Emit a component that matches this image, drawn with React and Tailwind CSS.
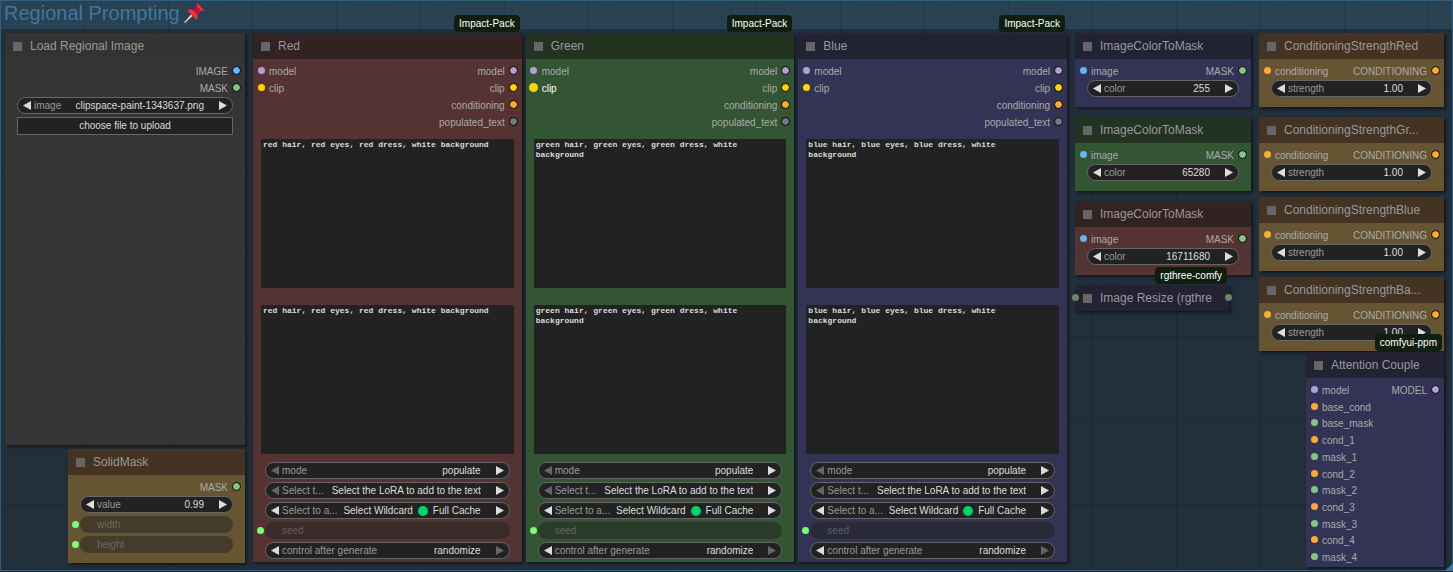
import { useId } from 'react';
import clsx from 'clsx';

const THEMES = {
  gray: { title: 'bg-[#333333]', body: 'bg-[#353535]' },
  red: { title: 'bg-[#332222]', body: 'bg-[#553333]' },
  green: { title: 'bg-[#223322]', body: 'bg-[#335533]' },
  blue: { title: 'bg-[#222233]', body: 'bg-[#333355]' },
  brown: { title: 'bg-[#443322]', body: 'bg-[#665533]' },
};

const DOTS = {
  model: 'bg-[#b39ddb]',
  clip: 'bg-[#ffd500]',
  conditioning: 'bg-[#ffa931]',
  image: 'bg-[#64b5f6]',
  mask: 'bg-[#81c784]',
  string: 'bg-[#777788]',
};

const PROMPTS = [
  { name: 'Red', theme: 'red', text: 'red hair, red eyes, red dress, white background' },
  { name: 'Green', theme: 'green', text: 'green hair, green eyes, green dress, white background', active: 'clip' },
  { name: 'Blue', theme: 'blue', text: 'blue hair, blue eyes, blue dress, white background' },
];

const PROMPT_OUTPUTS = [
  ['model', 'model'],
  ['clip', 'clip'],
  ['conditioning', 'conditioning'],
  ['populated_text', 'string'],
];

const COUPLE_INPUTS = [
  ['model', 'model'],
  ['base_cond', 'conditioning'],
  ['base_mask', 'mask'],
  ['cond_1', 'conditioning'],
  ['mask_1', 'mask'],
  ['cond_2', 'conditioning'],
  ['mask_2', 'mask'],
  ['cond_3', 'conditioning'],
  ['mask_3', 'mask'],
  ['cond_4', 'conditioning'],
  ['mask_4', 'mask'],
];

function Badge({ children }) {
  return (
    <span className="absolute right-0.5 -top-[18px] z-10 h-[17px] rounded-sm bg-[#0f1f0f] px-[5px] text-[10px] leading-[18px] font-medium text-white whitespace-nowrap">
      {children}
    </span>
  );
}

function Title({ children, theme }) {
  return (
    <header className={clsx('flex h-[26px] items-center gap-2 pl-2', THEMES[theme].title)}>
      <span className="size-[9px] shrink-0 bg-[#666666]" />
      <h2 className="text-xs text-[#999999] whitespace-nowrap">{children}</h2>
    </header>
  );
}

function Node({ title, theme, badge, className, children }) {
  return (
    <section className={clsx('relative shadow-[2px_2px_3px_rgba(0,0,0,0.5)]', THEMES[theme].body, className)}>
      {badge && <Badge>{badge}</Badge>}
      <Title theme={theme}>{title}</Title>
      {children}
    </section>
  );
}

function Slots({ inputs = [], outputs = [], active, className }) {
  return (
    <div className={clsx('flex justify-between pt-[3px] text-[10px] text-[#aaaaaa]', className)}>
      <ul className="flex flex-col pl-1">
        {inputs.map(([label, type]) => (
          <li key={label} className="flex h-[17px] min-h-0 items-center gap-1">
            <span className="flex w-2 justify-center">
              <span className={clsx('shrink-0 rounded-full', active === label ? 'size-[9px]' : 'size-[7px]', DOTS[type])} />
            </span>
            <span className={clsx('pt-0.5 leading-[15px]', active === label && 'font-medium text-white')}>{label}</span>
          </li>
        ))}
      </ul>
      <ul className="flex flex-col pr-1">
        {outputs.map(([label, type]) => (
          <li key={label} className="flex h-[17px] min-h-0 items-center justify-end gap-1">
            <span className="pt-0.5 leading-[15px]">{label}</span>
            <span className={clsx('size-[9px] rounded-full border border-black', DOTS[type])} />
          </li>
        ))}
      </ul>
    </div>
  );
}

function Arrow({ dir, label, dim }) {
  return (
    <button type="button" aria-label={label} disabled={dim} className={clsx('shrink-0', dim ? 'text-[#666666]' : 'text-[#dddddd]')}>
      <svg viewBox="0 0 8 8" preserveAspectRatio="none" className="h-[9px] w-2" fill="currentColor" aria-hidden="true">
        {dir === 'left' ? <path d="M0 4 8 0v8z" /> : <path d="M8 4 0 0v8z" />}
      </svg>
    </button>
  );
}

function Widget({ label, value, kind = 'number', dimLeft, dimRight, children }) {
  const id = useId();
  const field = 'w-0 min-w-0 flex-1 appearance-none bg-transparent text-right text-[#dddddd] outline-none';
  return (
    <div className="flex h-[17px] items-center rounded-full border border-[#666666] bg-[#222222] px-[5px] text-[10px] leading-[15px]">
      <Arrow dir="left" label={`Previous ${label}`} dim={dimLeft} />
      <label htmlFor={id} className="shrink-0 pl-[3px] text-[#999999]">{label}</label>
      {kind === 'number' && <input id={id} type="text" defaultValue={value} className={field} />}
      {kind === 'combo' && (
        <select id={id} defaultValue={value} className={clsx(field, '[text-align-last:right]')}>
          <option>{value}</option>
        </select>
      )}
      {kind === 'menu' && (
        <button id={id} type="button" aria-haspopup="listbox" className={clsx(field, 'flex items-center justify-end gap-[5px] whitespace-nowrap')}>
          {children}
        </button>
      )}
      <span className="w-[15px] shrink-0" />
      <Arrow dir="right" label={`Next ${label}`} dim={dimRight} />
    </div>
  );
}

// Widget converted to an input: only its label and a link dot are left
function LinkedWidget({ label }) {
  return (
    <div className="relative h-[17px] rounded-full bg-[#222222]/50 pl-[17px] text-[10px] leading-[17px] text-[#dddddd]/30">
      <span className="absolute top-[5px] -left-2 size-[7px] rounded-full bg-[#77ff77]" />
      {label}
    </div>
  );
}

function PromptNode({ name, theme, text, active }) {
  const area = 'block h-[149px] w-full resize-none bg-[#222222] py-px pr-3.5 pl-0.5 font-["Liberation_Mono",monospace] text-[8px] leading-[10px] font-bold text-[#dddddd] outline-none';
  return (
    <Node title={name} theme={theme} badge="Impact-Pack" className="min-w-0 flex-1 pb-[3px]">
      <Slots inputs={[['model', 'model'], ['clip', 'clip']]} outputs={PROMPT_OUTPUTS} active={active} />
      <div className="flex flex-col gap-[17px] px-2 pt-[9px] pb-2">
        <textarea aria-label={`${name} wildcard text`} defaultValue={text} spellCheck={false} className={area} />
        <textarea aria-label={`${name} populated text`} defaultValue={text} spellCheck={false} className={area} />
      </div>
      <div className="flex flex-col gap-[3px] px-3">
        <Widget label="mode" value="populate" kind="combo" dimLeft />
        <Widget label="Select t..." value="Select the LoRA to add to the text" kind="combo" dimLeft />
        <Widget label="Select to a..." kind="menu">
          Select Wildcard
          <span className="size-[10px] shrink-0 rounded-full bg-[#00d26a]" />
          Full Cache
        </Widget>
        <LinkedWidget label="seed" />
        <Widget label="control after generate" value="randomize" kind="combo" dimRight />
      </div>
    </Node>
  );
}

function ColorToMask({ theme, color }) {
  return (
    <Node title="ImageColorToMask" theme={theme} className="pb-[10px]">
      <Slots inputs={[['image', 'image']]} outputs={[['MASK', 'mask']]} />
      <div className="px-3 pt-px">
        <Widget label="color" value={color} />
      </div>
    </Node>
  );
}

function Strength({ title }) {
  return (
    <Node title={title} theme="brown" className="pb-[10px]">
      <Slots inputs={[['conditioning', 'conditioning']]} outputs={[['CONDITIONING', 'conditioning']]} />
      <div className="px-3 pt-px">
        <Widget label="strength" value="1.00" />
      </div>
    </Node>
  );
}

function Pin() {
  return (
    <svg viewBox="0 0 20 20" className="size-5" aria-hidden="true">
      <path d="M0 19.500 7 11.500l1.500 1.500L1 20z" fill="#d9d9d9" />
      <path d="M3.500 7.500c2-1.300 4-1.100 5.500-.3l4-3.700c-.5-1.200-.3-2.200.6-3L20 7c-.8.900-1.800 1.100-3 .6l-4 4c.8 1.600 1 3.700-.7 5.500z" fill="#f8312f" />
      <path d="m9 7.200 4-3.700 4 4.100-4 4z" fill="#ca0b4a" />
    </svg>
  );
}

export default function App() {
  return (
    <main className='relative min-h-screen bg-[#22303b] bg-[linear-gradient(to_right,rgba(0,0,0,0.1)_1px,transparent_1px),linear-gradient(to_bottom,rgba(0,0,0,0.1)_1px,transparent_1px),repeating-linear-gradient(to_right,rgba(0,0,0,0.04)_0_1px,transparent_1px_10%),repeating-linear-gradient(to_bottom,rgba(0,0,0,0.04)_0_1px,transparent_1px_10%)] bg-[size:84px_84px] font-["Liberation_Sans",Arial,sans-serif]'>
      <div className="min-h-[571px] border border-[#335d7c]">
        <header className="flex h-7 items-center gap-1 bg-[#3f789e]/25 pl-[3px]">
          <h1 className="pb-1 text-xl leading-6 text-[#3f789e]">Regional Prompting</h1>
          <div className="pb-1">
            <Pin />
          </div>
        </header>

        <div className="grid grid-cols-[minmax(0,240fr)_minmax(0,814fr)_minmax(0,176fr)_minmax(0,185fr)] items-start gap-2 pt-1 pr-2 pl-1">
          <div className="flex flex-col gap-1">
            <Node title="Load Regional Image" theme="gray" className="min-h-[412px]">
              <Slots outputs={[['IMAGE', 'image'], ['MASK', 'mask']]} />
              <div className="flex flex-col gap-[3px] px-3 pt-px">
                <Widget label="image" value="clipspace-paint-1343637.png" kind="combo" />
                <button type="button" className="h-[18px] border border-[#666666] bg-[#222222] text-[10px] leading-4 text-[#dddddd]">
                  choose file to upload
                </button>
              </div>
            </Node>
            <Node title="SolidMask" theme="brown" className="ml-[63px] pb-[10px]">
              <Slots outputs={[['MASK', 'mask']]} />
              <div className="flex flex-col gap-[3px] px-3 pt-px">
                <Widget label="value" value="0.99" />
                <LinkedWidget label="width" />
                <LinkedWidget label="height" />
              </div>
            </Node>
          </div>

          <div className="flex gap-1">
            {PROMPTS.map((p) => <PromptNode key={p.name} {...p} />)}
          </div>

          <div className="flex flex-col gap-[10px]">
            <ColorToMask theme="blue" color="255" />
            <ColorToMask theme="green" color="65280" />
            <ColorToMask theme="red" color="16711680" />
            <Node title="Image Resize (rgthre" theme="blue" badge="rgthree-comfy" className="mr-[22px]">
              <span className="absolute top-[9px] -left-[3px] size-[7px] rounded-full bg-[#668866]" />
              <span className="absolute top-[9px] -right-[3px] size-[7px] rounded-full bg-[#668866]" />
            </Node>
          </div>

          <div className="flex flex-col gap-1.5">
            <div className="flex flex-col gap-[10px]">
              <Strength title="ConditioningStrengthRed" />
              <Strength title="ConditioningStrengthGr..." />
            </div>
            <Strength title="ConditioningStrengthBlue" />
            <div className="flex flex-col gap-px">
              <Strength title="ConditioningStrengthBa..." />
              <Node title="Attention Couple" theme="blue" badge="comfyui-ppm" className="ml-[47px] pb-0.5">
                <Slots inputs={COUPLE_INPUTS} outputs={[['MODEL', 'model']]} className="h-[187px]" />
              </Node>
            </div>
          </div>
        </div>

        {/* Resize grip of the group */}
        <svg viewBox="0 0 8 8" className="absolute right-0 bottom-px size-2" aria-hidden="true">
          <path d="M8 0v8H0z" fill="#3f789e" />
        </svg>
      </div>
    </main>
  );
}
